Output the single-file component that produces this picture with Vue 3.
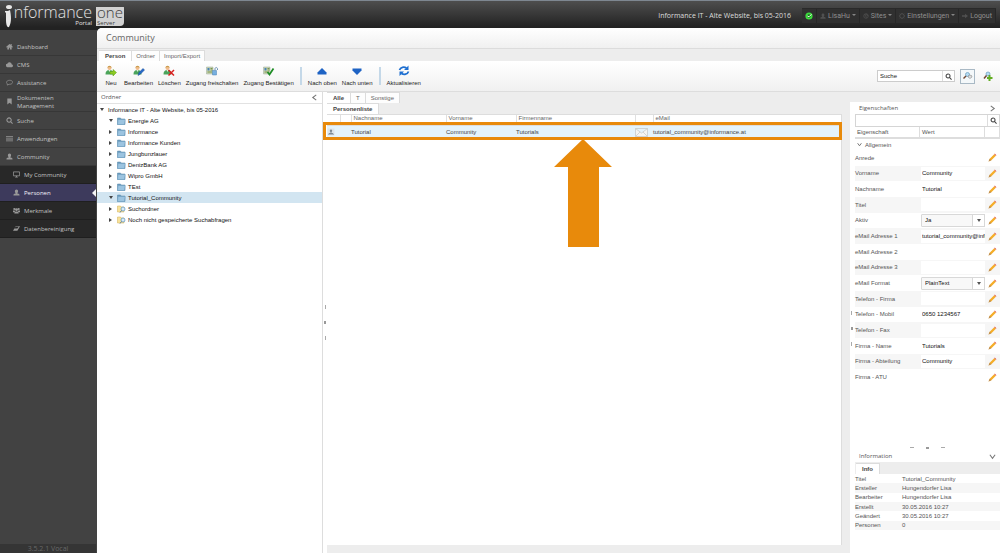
<script setup>
import { ref } from 'vue'

const search = ref('Suche')
const filter = ref('')

const nav = [
  { label: 'Dashboard', icon: 'home' },
  { label: 'CMS', icon: 'cloud' },
  { label: 'Assistance', icon: 'chat' },
  { label: 'Dokumenten Management', icon: 'bookmark', tall: true },
  { label: 'Suche', icon: 'search' },
  { label: 'Anwendungen', icon: 'menu' },
  { label: 'Community', icon: 'user' },
]
const subnav = [
  { label: 'My Community', icon: 'monitor' },
  { label: 'Personen', icon: 'user', active: true },
  { label: 'Merkmale', icon: 'group' },
  { label: 'Datenbereinigung', icon: 'eraser' },
]
const userMenu = [
  { label: 'LisaHu', icon: 'user', caret: true },
  { label: 'Sites', icon: 'globe', caret: true },
  { label: 'Einstellungen', icon: 'gear', caret: true },
  { label: 'Logout', icon: 'arrow' },
]
const tools = [
  { label: 'Neu', icon: 'add', first: true },
  { label: 'Bearbeiten', icon: 'edit' },
  { label: 'Löschen', icon: 'delete' },
  { label: 'Zugang freischalten', icon: 'unlock' },
  { label: 'Zugang Bestätigen', icon: 'confirm' },
  { sep: true },
  { label: 'Nach oben', icon: 'up' },
  { label: 'Nach unten', icon: 'down' },
  { sep: true },
  { label: 'Aktualisieren', icon: 'refresh' },
]
const tree = [
  { label: 'Energie AG', open: true },
  { label: 'Informance' },
  { label: 'Informance Kunden' },
  { label: 'Jungbunzlauer' },
  { label: 'DenizBank AG' },
  { label: 'Wipro GmbH' },
  { label: 'TEst' },
  { label: 'Tutorial_Community', open: true, selected: true },
  { label: 'Suchordner', search: true },
  { label: 'Noch nicht gespeicherte Suchabfragen', search: true },
]
const props = ref([
  { id: 'anrede', label: 'Anrede', value: '' },
  { id: 'vorname', label: 'Vorname', value: 'Community' },
  { id: 'nachname', label: 'Nachname', value: 'Tutorial' },
  { id: 'titel', label: 'Titel', value: '' },
  { id: 'aktiv', label: 'Aktiv', value: 'Ja', options: ['Ja', 'Nein'] },
  { id: 'mail1', label: 'eMail Adresse 1', value: 'tutorial_community@informance.at' },
  { id: 'mail2', label: 'eMail Adresse 2', value: '' },
  { id: 'mail3', label: 'eMail Adresse 3', value: '' },
  { id: 'format', label: 'eMail Format', value: 'PlainText', options: ['PlainText', 'HTML'] },
  { id: 'telfirma', label: 'Telefon - Firma', value: '' },
  { id: 'telmobil', label: 'Telefon - Mobil', value: '0650 1234567' },
  { id: 'telfax', label: 'Telefon - Fax', value: '' },
  { id: 'firma', label: 'Firma - Name', value: 'Tutorials' },
  { id: 'abteilung', label: 'Firma - Abteilung', value: 'Community' },
  { id: 'atu', label: 'Firma - ATU', value: '' },
])
const info = [
  ['Titel', 'Tutorial_Community'],
  ['Ersteller', 'Hungendorfer Lisa'],
  ['Bearbeiter', 'Hungendorfer Lisa'],
  ['Erstellt', '30.05.2016 10:27'],
  ['Geändert', '30.05.2016 10:27'],
  ['Personen', '0'],
]

const glyphs = {
  home: 'M8 2 0 9l1 1 2-1v6h4v-4h2v4h4V9l2 1 1-1-3-3V2h-2v2z',
  cloud: 'M4 14a4 4 0 0 1-1-8 5 5 0 0 1 9-1 3 3 0 0 1 1 3 3 3 0 0 1 0 6z',
  bookmark: 'M3 1h10v14l-5-4-5 4z',
  menu: 'M0 2h16v2H0zM0 6h16v2H0zM0 10h16v2H0zM0 13h16v1H0z',
  user: 'M8 1c5 0 4 7 2 8v1c4 0 5 2 5 5H1c0-3 1-5 5-5V9C4 8 3 1 8 1z',
  group: 'M3 2a2 2 0 1 1 0 5 2 2 0 0 1 0-5zM13 2a2 2 0 1 1 0 5 2 2 0 0 1 0-5zM8 3a3 3 0 1 1 0 6 3 3 0 0 1 0-6zM0 8h4l1 2-2 2H0zM16 8h-4l-1 2 2 2h3zM3 15c0-4 2-5 5-5s5 1 5 5z',
  eraser: 'M6 3h10l-6 10H0zM6 4 3 8h7l3-4z',
  arrow: 'M0 6h8V2l8 6-8 6v-4H0z',
}
</script>

<template>
  <div class="app">
    <header class="top">
      <a class="logo" href="#" aria-label="Informance one Portal Server">
        <svg class="logo-i" viewBox="0 0 8 24" aria-hidden="true">
          <ellipse cx="4" cy="3" rx="3" ry="2" />
          <path d="M0 7c2 0 4 0 5-1 1 5 2 12-1 17C2 24 1 20 1 16V9L0 8z" />
        </svg>
        <span class="logo-text"><span class="logo-name">nformance</span><span class="logo-sub">Portal</span></span>
        <span class="plate"><span class="logo-name">one</span><span class="logo-sub">Server</span></span>
      </a>
      <div class="site">Informance IT - Alte Website, bis 05-2016</div>
      <nav class="usermenu" aria-label="Benutzer">
        <span class="status">
          <svg viewBox="0 0 10 10" aria-hidden="true"><circle cx="5" cy="5" r="4.5" fill="#3ddc3d" /><circle cx="5" cy="5" r="2.2" fill="#176a1d" /><path d="M3 5l2 1 3-3" fill="none" stroke="#fff" stroke-width="1.2" /></svg>
        </span>
        <button v-for="m in userMenu" :key="m.label" type="button">
          <svg class="uicon" viewBox="0 0 16 16" aria-hidden="true">
            <path v-if="glyphs[m.icon]" :d="glyphs[m.icon]" fill="currentColor" />
            <g v-else fill="none" stroke="currentColor" stroke-width="2">
              <circle cx="8" cy="8" r="6" />
              <path v-if="m.icon === 'globe'" d="M4 4l4 2-1 3 4 3M9 2l2 4 3 1" />
              <path v-else d="M8 0v3M8 13v3M0 8h3M13 8h3M2 2l2 2M12 12l2 2M14 2l-2 2M4 12l-2 2" />
            </g>
          </svg>
          <span>{{ m.label }}</span>
          <i v-if="m.caret" class="caret"></i>
        </button>
      </nav>
    </header>

    <div class="main">
      <aside class="sidebar">
        <nav class="menu" aria-label="Hauptmenü">
          <a v-for="n in nav" :key="n.label" href="#" :class="{ tall: n.tall }">
            <svg class="nicon" viewBox="0 0 16 16" aria-hidden="true">
              <path v-if="glyphs[n.icon]" :d="glyphs[n.icon]" fill="currentColor" />
              <path v-else-if="n.icon === 'chat'" d="M3 11C-1 8 2 3 8 3s9 4 6 7c-2 2-4 2-7 2l-4 2z" fill="none" stroke="currentColor" stroke-width="1.6" />
              <g v-else fill="none" stroke="currentColor" stroke-width="2.4"><circle cx="7" cy="7" r="5" /><path d="M11 11l4 4" /></g>
            </svg>
            <span>{{ n.label }}</span>
          </a>
          <div class="sub">
            <a v-for="n in subnav" :key="n.label" href="#" :class="{ active: n.active }">
              <svg class="nicon" viewBox="0 0 16 16" aria-hidden="true">
                <path v-if="glyphs[n.icon]" :d="glyphs[n.icon]" fill="currentColor" />
                <g v-else><path d="M1 2h14v9H1z" fill="none" stroke="currentColor" stroke-width="1.8" /><path d="M7 11h2v2h2v2H5v-2h2z" fill="currentColor" /></g>
              </svg>
              <span>{{ n.label }}</span>
            </a>
          </div>
        </nav>
        <div class="version">3.5.2.1 Vocal</div>
      </aside>

      <main class="content">
        <h1>Community</h1>
        <div class="tabs page-tabs">
          <button type="button" class="on">Person</button>
          <button type="button">Ordner</button>
          <button type="button">Import/Export</button>
        </div>
        <div class="toolbar">
          <template v-for="(t, i) in tools" :key="i">
            <i v-if="t.sep" class="tsep"></i>
            <button v-else type="button" class="tool" :class="{ first: t.first }">
              <svg viewBox="0 0 24 24" aria-hidden="true">
                <g v-if="['add', 'edit', 'delete'].includes(t.icon)">
                  <circle cx="9" cy="6" r="4" fill="#f0bd8c" /><path d="M5 6c0-6 8-6 8 0-2-3-6-3-8 0z" fill="#c89a4d" />
                  <path d="M1 19c0-6 2-9 8-9s8 3 8 9z" fill="#4ba45b" /><path d="M7 10h4l-2 4z" fill="#dff0df" />
                </g>
                <path v-if="t.icon === 'add'" d="M10 13h6V9l7 6-7 7v-4h-6z" fill="#8ccc22" stroke="#5b9b12" />
                <path v-if="t.icon === 'edit'" d="M10 21l2-6 8-8 3 3-8 8z" fill="#2468c9" stroke="#174891" />
                <path v-if="t.icon === 'delete'" d="M11 10l11 11M22 10L11 21" stroke="#d81f1f" stroke-width="3" />
                <g v-if="t.icon === 'unlock' || t.icon === 'confirm'">
                  <path d="M1 4h13v14H1z" fill="#cbd6b4" stroke="#9aab9b" /><path d="M3 6h4v5H3z" fill="#4b83b4" /><path d="M9 7h4M9 10h4M3 14h9" stroke="#79934f" stroke-width="2" />
                </g>
                <g v-if="t.icon === 'unlock'"><path d="M13 11h8v9h-8z" fill="#76afe0" stroke="#4b83b4" /><path d="M18 11V8c0-4 5-4 5 0v2" fill="none" stroke="#6d93b5" stroke-width="2" /></g>
                <path v-if="t.icon === 'confirm'" d="M9 14l4 5 8-12" fill="none" stroke="#1d8c24" stroke-width="3.5" />
                <path v-if="t.icon === 'up'" d="M12 6l9 9v4H3v-4z" fill="#1e63c4" />
                <path v-if="t.icon === 'down'" d="M12 20l-9-9V7h18v4z" fill="#1e63c4" />
                <g v-if="t.icon === 'refresh'" fill="none" stroke="#1e6fd0" stroke-width="3.5"><path d="M3 10c2-6 9-7 14-4M21 13c-2 6-9 7-14 4" /><path d="M21 1v9h-9zM3 22v-9h9z" fill="#1e6fd0" stroke="none" /></g>
              </svg>
              <span>{{ t.label }}</span>
            </button>
          </template>
          <div class="searchbar">
            <input v-model="search" type="text" aria-label="Suche" />
            <button type="button" aria-label="Suchen"><svg viewBox="0 0 16 16"><g fill="none" stroke="#444" stroke-width="2.4"><circle cx="7" cy="7" r="4.5" /><path d="M10 10l5 5" /></g></svg></button>
          </div>
          <button type="button" class="sq framed" aria-label="Erweiterte Suche"><svg viewBox="0 0 20 20"><circle cx="9" cy="7" r="4" fill="#b5dcf3" stroke="#6f9dbd" stroke-width="1.5" /><path d="M6 10l-5 5" stroke="#704733" stroke-width="3" /><path d="M12 8l5 1 1 3-4 3-4-3z" fill="#ddd" stroke="#777" /></svg></button>
          <button type="button" class="sq" aria-label="Suche hinzufügen"><svg viewBox="0 0 20 20"><circle cx="10" cy="6" r="4" fill="#b5dcf3" stroke="#6f9dbd" stroke-width="1.5" /><path d="M7 9l-5 6" stroke="#704733" stroke-width="3" /><path d="M11 8h4v4h4v4h-4v4h-4v-4H8v-4h3z" fill="#63ad22" /></svg></button>
        </div>

        <div class="panels">
          <section class="folders">
            <div class="phead"><span>Ordner</span><svg viewBox="0 0 8 8"><path d="M6 1L2 4l4 3" /></svg></div>
            <ul>
              <li class="root"><i class="tw open"></i><span>Informance IT - Alte Website, bis 05-2016</span></li>
              <li v-for="n in tree" :key="n.label" :class="{ selected: n.selected }">
                <i class="tw" :class="{ open: n.open }"></i>
                <svg class="folder" viewBox="0 0 18 16" aria-hidden="true">
                  <g v-if="n.search"><path d="M1 2h6l1 2h6v10H1z" fill="#f7e29a" stroke="#d3b154" /><circle cx="12" cy="8" r="4" fill="#d8ebf8" stroke="#6297c2" stroke-width="1.5" /><path d="M9 11l-3 4" stroke="#5e7d9c" stroke-width="2" /></g>
                  <g v-else><path d="M1 2h6l1 2h8v11H1z" fill="#6c9dbf" stroke="#5586a8" /><path d="M2 5h14v2l-1 8H1z" fill="#9cc4e0" stroke="#6c9dbf" /></g>
                </svg>
                <span>{{ n.label }}</span>
              </li>
            </ul>
          </section>
          <div class="split"><i></i><b></b><i></i></div>

          <section class="center">
            <div class="tabs">
              <button type="button" class="on">Alle</button>
              <button type="button">T</button>
              <button type="button">Sonstige</button>
            </div>
            <div class="tabs second"><button type="button" class="on">Personenliste</button></div>
            <div class="list">
              <table class="people">
                <colgroup><col class="c1" /><col class="c2" /><col class="c3" /><col class="c4" /><col class="c5" /><col class="c6" /><col /></colgroup>
                <thead><tr><th></th><th></th><th>Nachname</th><th>Vorname</th><th>Firmenname</th><th></th><th>eMail</th></tr></thead>
                <tbody>
                  <tr>
                    <td><svg class="person" viewBox="0 0 16 16"><path d="M1 1h14v14H1z" fill="#dde5ea" /><path d="M8 3c3 0 3 4 1 5v2c3 0 4 1 4 2H3c0-1 1-2 4-2V8C5 7 5 3 8 3zM2 13h12v1H2z" fill="#7d8a94" /></svg></td>
                    <td></td><td>Tutorial</td><td>Community</td><td>Tutorials</td>
                    <td><svg class="mail" viewBox="0 0 26 18"><path d="M1 1h24v16H1zM1 1l12 9L25 1M1 17l9-9M25 17l-9-9" fill="#f5f5f2" stroke="#c5c8c8" stroke-width="1.5" /></svg></td>
                    <td>tutorial_community@informance.at</td>
                  </tr>
                </tbody>
              </table>
              <div class="highlight"></div>
              <svg class="pointer" viewBox="0 0 58 108" aria-hidden="true"><path d="M29 0l29 28H45v80H14V28H0z" fill="#e88a0b" /></svg>
            </div>
          </section>

          <aside class="side">
            <div class="phead"><span>Eigenschaften</span><svg viewBox="0 0 8 8"><path d="M2 1l4 3-4 3" /></svg></div>
            <div class="filter">
              <input v-model="filter" type="text" aria-label="Eigenschaft filtern" />
              <button type="button" aria-label="Filtern"><svg viewBox="0 0 16 16"><g fill="none" stroke="#444" stroke-width="2.4"><circle cx="7" cy="7" r="4.5" /><path d="M10 10l5 5" /></g></svg></button>
            </div>
            <div class="cols"><span>Eigenschaft</span><span>Wert</span><span></span></div>
            <div class="group"><svg viewBox="0 0 8 8"><path d="M1 2l3 4 3-4" /></svg>Allgemein</div>
            <table class="props">
              <tbody>
                <tr v-for="p in props" :key="p.id">
                  <th scope="row"><label :for="p.id">{{ p.label }}</label></th>
                  <td>
                    <div v-if="p.options" class="combo">
                      <select :id="p.id" v-model="p.value"><option v-for="o in p.options" :key="o">{{ o }}</option></select>
                      <i class="arrow"></i>
                    </div>
                    <input v-else :id="p.id" v-model="p.value" type="text" />
                  </td>
                  <td class="pen"><button type="button" :aria-label="p.label + ' bearbeiten'"><svg viewBox="0 0 16 16"><path d="M1 15l2-5 8-8 3 3-8 8z" fill="#f5ad28" /><path d="M11 2l1-1 3 3-1 1z" fill="#df5949" /><path d="M1 15l2-5 3 3z" fill="#b98c56" /></svg></button></td>
                </tr>
              </tbody>
            </table>
            <div class="grow"></div>
            <div class="hsplit"><i></i><b></b><i></i></div>
            <div class="phead"><span>Information</span><svg viewBox="0 0 8 8"><path d="M1 2l3 4 3-4" /></svg></div>
            <div class="tabs info-tabs"><button type="button" class="on">Info</button></div>
            <table class="info">
              <tbody><tr v-for="r in info" :key="r[0]"><th scope="row">{{ r[0] }}</th><td>{{ r[1] }}</td></tr></tbody>
            </table>
            <div class="vsplit"><i></i><b></b><i></i></div>
          </aside>
        </div>
      </main>
    </div>
  </div>
</template>

<style>
body { background: #424242; }
</style>

<style scoped>
* { box-sizing: border-box; }
.app { min-height: 100vh; display: flex; flex-direction: column; font: 6px/8px "Liberation Sans", Arial, sans-serif; color: #333; background: #424242; }
button, input, select { font: inherit; color: inherit; margin: 0; padding: 0; border: 0; background: none; border-radius: 0; }
a { color: inherit; text-decoration: none; }
table { border-collapse: collapse; border-spacing: 0; }
th { font-weight: normal; text-align: left; }
th, td { padding: 0; }
svg { display: block; flex: none; }

.top { height: 30px; display: flex; align-items: center; padding-right: 4px; border-top: 1px solid #7e8791; background: linear-gradient(#4e4e4e, #222 90%); font-family: "Open Sans", sans-serif; }
.logo { display: flex; align-items: flex-start; align-self: flex-start; padding: 3px 0 0 5px; color: #e2e2e2; }
.logo-i { width: 8px; height: 24px; fill: #e8e8e8; }
.logo-text, .plate { display: flex; flex-direction: column; height: 22px; justify-content: space-between; }
.logo-text { width: 79px; align-items: flex-end; margin-right: 4px; }
.logo-name { font-size: 16px; line-height: 16px; font-weight: 300; }
.logo-sub { font-size: 6px; line-height: 6px; }
.plate { width: 28px; padding-left: 1px; background: linear-gradient(transparent 3px, #d2d2d2 3px); color: #3c3c3c; border-radius: 0 4px 4px 0; }
.plate .logo-name { font-size: 15px; }
.site { margin-left: auto; font-size: 7px; line-height: 10px; color: #ddd; }
.usermenu { display: flex; height: 15px; margin-left: 11px; border-top: 1px solid #2a2a2a; background: #303030; color: #8f8f8f; }
.usermenu button, .status { display: flex; align-items: center; gap: 2px; padding: 0 3px; border-right: 1px solid #272727; }
.usermenu button { font: 7px/8px Roboto, sans-serif; }
.status svg { width: 8px; height: 8px; }
.uicon { width: 6px; height: 6px; color: #505050; }
.caret { align-self: flex-start; margin-top: 5px; border: 2px solid transparent; border-top-color: #858585; border-bottom: 0; }

.main { flex: 1; display: flex; }
.sidebar { flex: none; width: 96px; display: flex; flex-direction: column; background: #424242; }
.menu { flex: 1; padding-top: 8px; font: 6px/8px "Open Sans", sans-serif; color: #c2c2c2; }
.menu a { display: flex; align-items: center; gap: 4px; height: 18px; padding-left: 6px; border-bottom: 1px solid #373737; }
.menu a.tall { height: 20px; }
.menu a.tall span { width: 50px; }
.nicon { width: 7px; height: 7px; color: #989898; }
.sub { background: #282828; }
.sub a { padding-left: 13px; border-bottom-color: #1f1f1f; position: relative; }
.sub a.active { background: #3d3a5c; color: #f2f2f6; }
.sub a.active::after { content: ""; position: absolute; right: 0; top: 5px; border: 4px solid transparent; border-right-color: #f4f4f4; border-left: 0; }
.version { height: 9px; background: #353535; color: #686868; text-align: center; font: 7px/9px "Open Sans", sans-serif; }

.content { flex: 1; min-width: 0; display: flex; flex-direction: column; margin: -2px 0 0 1px; background: #fff; border-radius: 5px 0 0 0; }
h1 { height: 21px; margin: 0; padding-left: 9px; border-bottom: 1px solid #dcdcdc; border-radius: 5px 0 0 0; background: linear-gradient(#fff, #f0f0f0); font: 400 9px/20px "Open Sans", sans-serif; color: #666; }
.tabs { display: flex; align-items: flex-end; background: #ededed; }
.tabs button { height: 11px; padding: 0 5px; border: 1px solid #dcdcdc; border-left: 0; border-bottom: 0; background: #fdfdfd; color: #666; line-height: 10px; }
.tabs button.on { padding: 0 6px; background: #fff; color: #444; font-weight: bold; }
.page-tabs { height: 12px; padding-left: 2px; }
.page-tabs button { padding: 0 4px; }
.toolbar { height: 31px; display: flex; align-items: center; gap: 5px; padding: 0 5px 0 8px; border-bottom: 1px solid #ddd; background: linear-gradient(#fff, #f0f0f0); color: #222; }
.tool { display: flex; flex-direction: column; align-items: center; gap: 2px; white-space: nowrap; }
.tool svg { width: 12px; height: 12px; }
.tool.first { margin-right: 2px; }
.tsep { width: 2px; height: 18px; margin: 0 1px; background: #c4d8e8; }
.searchbar { display: flex; width: 78px; height: 12px; margin-left: auto; border: 1px solid #ccc; background: #fff; }
.searchbar input { flex: 1; min-width: 0; padding-left: 2px; }
.searchbar button { width: 12px; border-left: 1px solid #ddd; display: grid; place-items: center; }
.searchbar svg, .filter svg { width: 7px; height: 7px; }
.sq { width: 15px; height: 15px; display: grid; place-items: center; border: 1px solid transparent; }
.sq.framed { border-color: #a9b9c5; background: #f4f8fa; }
.sq svg { width: 10px; height: 10px; }

.panels { flex: 1; display: flex; }
.phead { display: flex; align-items: center; justify-content: space-between; height: 12px; padding: 0 4px; font: 6px/11px "Open Sans", sans-serif; color: #555; }
.phead svg { width: 7px; height: 7px; fill: none; stroke: #777; stroke-width: 1.2; }
.folders { flex: none; width: 226px; border-right: 1px solid #ddd; color: #111; }
.folders .phead { border-bottom: 1px solid #e2e2e2; }
ul { list-style: none; margin: 0; padding: 0; }
li { display: flex; align-items: center; height: 11px; padding-left: 11px; white-space: nowrap; }
li.root { padding-left: 2px; }
li.selected { background: #d2e5f1; }
.tw { flex: none; margin: 0 5px 0 1px; border: 2px solid transparent; border-left: 3px solid #444; border-right: 0; width: 3px; height: 4px; }
.tw.open { border: 2px solid transparent; border-top: 3px solid #444; border-bottom: 0; width: 4px; height: 3px; margin: 0 4px 0 1px; }
.folder { width: 9px; height: 8px; margin-right: 2px; }
.split { flex: none; width: 4px; display: flex; flex-direction: column; align-items: center; justify-content: center; gap: 12px; }
.split i, .vsplit i { width: 1px; height: 4px; background: #aaa; }
.split b, .vsplit b { width: 2px; height: 3px; background: #999; }

.center { flex: 1; min-width: 0; display: flex; flex-direction: column; background: #ededed; padding: 0 0 8px; }
.center .tabs { height: 11px; }
.list { flex: 1; margin-right: 8px; position: relative; background: #fff; border: 1px solid #ddd; border-width: 1px 1px 0 0; }
.people { width: 100%; table-layout: fixed; color: #444; }
.people thead th { height: 10px; padding-left: 2px; vertical-align: top; line-height: 7px; color: #666; border-left: 1px solid #e0e0e0; border-bottom: 1px solid #ddd; }
.people thead th:first-child { border-left: 0; }
.people td { height: 14px; background: #e4f3fb; white-space: nowrap; }
.c1 { width: 13px; } .c2 { width: 11px; } .c3 { width: 95px; } .c4 { width: 70px; } .c5 { width: 119px; } .c6 { width: 18px; }
.person { width: 8px; height: 8px; }
.mail { width: 13px; height: 9px; }
.highlight { position: absolute; left: -4px; right: -1px; top: 7px; height: 18px; border: 3px solid #e88a0b; }
.pointer { position: absolute; left: 227px; top: 24px; width: 58px; height: 108px; }

.side { flex: none; width: 150px; position: relative; display: flex; flex-direction: column; padding-left: 5px; border-top: 10px solid #ededed; background: #fff; color: #555; }
.filter { display: flex; height: 13px; border: 1px solid #d5d5d5; }
.filter input { flex: 1; min-width: 0; }
.filter button { width: 12px; border-left: 1px solid #ddd; display: grid; place-items: center; }
.cols { display: flex; height: 12px; border-bottom: 2px solid #ddd; line-height: 10px; }
.cols span { width: 65px; padding-left: 2px; border-right: 1px solid #ddd; }
.cols span:last-child { flex: 1; width: auto; }
.group { display: flex; align-items: center; gap: 3px; height: 11px; padding-left: 2px; }
.group svg { width: 5px; height: 5px; fill: none; stroke: #666; stroke-width: 1.4; }
.props { width: 100%; height: 235px; table-layout: fixed; }
.props th { width: 66px; }
.props .pen { width: 14px; padding-left: 2px; }
.props tr:nth-child(even) { background: #f6f6f6; }
.props input { display: block; width: 64px; height: 13px; padding-left: 1px; background: #fff; color: #111; }
.combo { position: relative; width: 64px; height: 13px; }
.combo select { appearance: none; width: 100%; height: 13px; padding: 0 14px 0 3px; border: 1px solid #d8d8d8; border-radius: 1px; background: #f8f8f8; color: #111; }
.combo .arrow { position: absolute; right: 0; top: 0; width: 13px; height: 13px; border: 1px solid #d8d8d8; background: #fff; pointer-events: none; display: grid; place-items: center; }
.combo .arrow::after { content: ""; border: 2px solid transparent; border-top: 3px solid #555; border-bottom: 0; }
.pen button { display: block; }
.pen svg { width: 9px; height: 9px; }
.grow { flex: 1; }
.hsplit { display: flex; justify-content: center; align-items: center; gap: 12px; height: 5px; }
.hsplit i { width: 4px; height: 1px; background: #aaa; }
.hsplit b { width: 3px; height: 2px; background: #999; }
.info-tabs { height: 12px; padding-left: 1px; }
.info { width: 100%; height: 56px; margin-bottom: 23px; }
.info th { width: 47px; }
.info tr:nth-child(even) { background: #f6f6f6; }
.vsplit { position: absolute; left: 1px; top: 209px; display: flex; flex-direction: column; gap: 12px; }
</style>
